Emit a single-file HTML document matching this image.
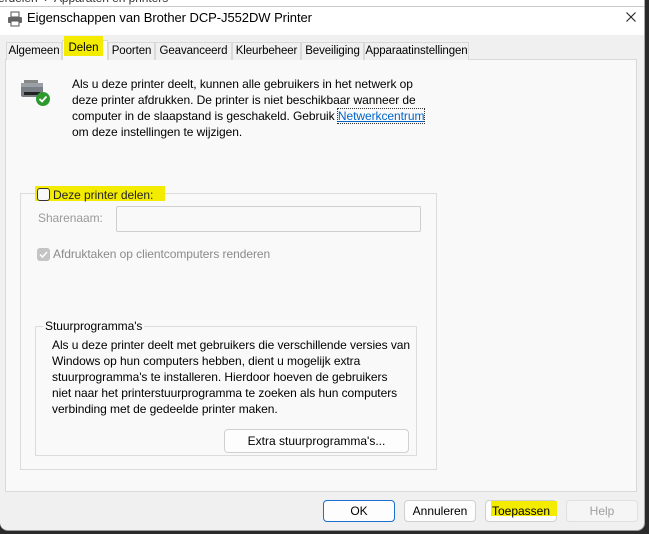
<!DOCTYPE html>
<html><head><meta charset="utf-8"><style>
*{margin:0;padding:0;box-sizing:border-box}
body{width:649px;height:534px;background:#2a2a2a;font-family:"Segoe UI","Liberation Sans",sans-serif;font-size:12px;color:#000;position:relative;overflow:hidden}
.abs{position:absolute}
#win{left:0;top:0;width:645px;height:531px;background:#f0f0f0;border-radius:0 0 8px 8px;border-right:1px solid #aaa;border-bottom:1px solid #999;overflow:hidden}
#bgstrip{left:0;top:0;width:649px;height:6px;background:#fff;overflow:hidden}
#title{left:0;top:6px;width:645px;height:29px;background:#fff;border-top:1px solid #ccc}
.tab{position:absolute;top:42px;height:18px;border:1px solid #d9d9d9;border-bottom:none;background:#f0f0f0;font-size:11.5px;line-height:16px;text-align:center;letter-spacing:-0.1px}
#panel{left:5px;top:59px;width:632px;height:433px;background:#f9f9f9;border:1px solid #d9d9d9}
.t{position:absolute;white-space:nowrap;line-height:16px;letter-spacing:-0.06px}
.btn{position:absolute;top:500px;height:22px;width:72px;border:1px solid #d0d0d0;border-radius:4px;background:#fdfdfd;text-align:center;line-height:20px;font-size:12px}
</style></head><body>
<div id="win" class="abs">
<div id="bgstrip" class="abs"><span class="t" style="left:-2px;top:-10px;color:#333">erdelen &nbsp;›&nbsp; Apparaten en printers</span></div>
<div id="title" class="abs">
<svg class="abs" style="left:7px;top:4px" width="16" height="16" viewBox="0 0 16 16"><rect x="4" y="1" width="8" height="5" fill="#fff" stroke="#555"/><rect x="1" y="6" width="14" height="6" rx="1" fill="#666"/><rect x="4" y="10" width="8" height="5" fill="#fff" stroke="#555"/></svg>
<span class="t" style="left:27px;top:3px;font-size:13px">Eigenschappen van Brother DCP-J552DW Printer</span>
<svg class="abs" style="left:626px;top:5px" width="10" height="10"><path d="M0.5 0.5l9 9M9.5 0.5l-9 9" stroke="#222" stroke-width="1.1"/></svg>
</div>
<div id="panel" class="abs"></div>
<div class="tab" style="left:6px;width:56px">Algemeen</div>
<div class="tab" style="left:62px;top:40px;height:20px;width:46px;background:#f9f9f9;z-index:2"></div>
<div class="abs" style="left:64px;top:36px;width:39px;height:20px;background:#f4ec00;z-index:3;font-size:11.5px;text-align:center;line-height:24px">Delen</div>
<div class="tab" style="left:108px;width:47px">Poorten</div>
<div class="tab" style="left:155px;width:77px">Geavanceerd</div>
<div class="tab" style="left:232px;width:69px">Kleurbeheer</div>
<div class="tab" style="left:301px;width:63px">Beveiliging</div>
<div class="tab" style="left:364px;width:105px">Apparaatinstellingen</div>

<svg class="abs" style="left:20px;top:80px" width="32" height="28" viewBox="0 0 32 28"><rect x="4" y="0" width="14" height="4" fill="#888"/><rect x="1" y="3" width="22" height="14" rx="2" fill="#7a7f85"/><rect x="1" y="3" width="22" height="4" fill="#9aa0a5"/><rect x="4" y="12" width="16" height="3" fill="#222"/><circle cx="23" cy="19" r="7" fill="#2e9a2e"/><path d="M19.5 19l2.5 2.5 4.5-5" stroke="#fff" stroke-width="1.8" fill="none"/></svg>
<div class="t" style="left:72px;top:76px">Als u deze printer deelt, kunnen alle gebruikers in het netwerk op<br>deze printer afdrukken. De printer is niet beschikbaar wanneer de<br>computer in de slaapstand is geschakeld. Gebruik <span style="color:#0066cc;text-decoration:underline;outline:1px dotted #333">Netwerkcentrum</span><br>om deze instellingen te wijzigen.</div>

<div class="abs" style="left:20px;top:193px;width:417px;height:277px;border:1px solid #dcdcdc"></div>
<div class="abs" style="left:35px;top:186px;width:130px;height:15px;background:#f4ec00"></div>
<div class="abs" style="left:37px;top:188px;width:13px;height:13px;border:1px solid #333;border-radius:3px;background:#f9f9f9"></div>
<span class="t" style="left:53px;top:187px;color:#222">Deze printer delen:</span>
<span class="t" style="left:38px;top:210px;color:#9a9a9a">Sharenaam:</span>
<div class="abs" style="left:116px;top:206px;width:305px;height:26px;border:1px solid #cfcfcf;border-radius:2px;background:#f9f9f9"></div>
<div class="abs" style="left:37px;top:248px;width:13px;height:13px;border-radius:3px;background:#c4c4c4"><svg width="13" height="13"><path d="M3 6.5l2.5 2.5 4.5-5" stroke="#fff" stroke-width="1.5" fill="none"/></svg></div>
<span class="t" style="left:53px;top:246px;color:#8a8a8a">Afdruktaken op clientcomputers renderen</span>

<div class="abs" style="left:35px;top:326px;width:382px;height:130px;border:1px solid #dcdcdc"></div>
<span class="t" style="left:43px;top:318px;background:#f9f9f9;padding:0 2px">Stuurprogramma's</span>
<div class="t" style="left:52px;top:337px">Als u deze printer deelt met gebruikers die verschillende versies van<br>Windows op hun computers hebben, dient u mogelijk extra<br>stuurprogramma's te installeren. Hierdoor hoeven de gebruikers<br>niet naar het printerstuurprogramma te zoeken als hun computers<br>verbinding met de gedeelde printer maken.</div>
<div class="btn" style="left:224px;top:429px;width:185px;height:24px;line-height:22px">Extra stuurprogramma's...</div>

<div class="btn" style="left:323px;border:1px solid #1a6fd0">OK</div>
<div class="btn" style="left:404px">Annuleren</div>
<div class="btn" style="left:485px"><div class="abs" style="left:5px;top:0;width:66px;height:15px;background:#f4ec00"></div><span style="position:relative">Toepassen</span></div>
<div class="btn" style="left:566px;color:#a0a0a0;background:#f5f5f5;border-color:#e0e0e0">Help</div>
</div>
</body></html>
